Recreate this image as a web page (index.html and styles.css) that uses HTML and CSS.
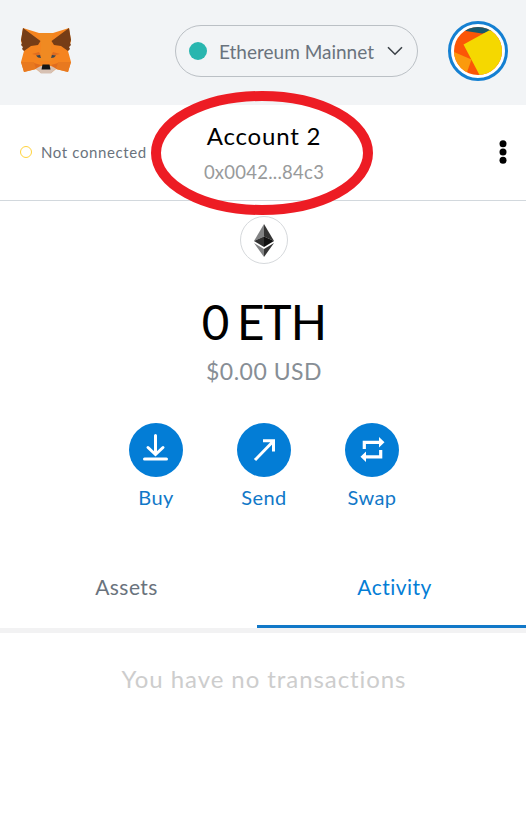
FILE: index.html
```html
<!DOCTYPE html>
<html lang="en">
<head>
<meta charset="utf-8">
<title>Wallet</title>
<link rel="stylesheet" href="styles.css">
</head>
<body>
<header class="topbar">
  <svg class="fox" viewBox="0 0 50 48" width="50" height="48">
    <path fill="#f5841f" d="M2 1 18 6H32L48 1 50 14 47 24 50 35 47 45 35 42 30 46H20L15 42 3 45 0 35 3 24 0 14Z"/>
    <path fill="#e8791f" d="M0 35H13L15 42 3 45ZM50 35H37L35 42 47 45Z"/>
    <path fill="#f08a22" d="M18 6H32L30 17 31 34H19L20 17Z"/>
    <path fill="#763d16" d="M2 1 19.500 14 17 18 10 19 3 24 1 22 2 20 0 18 1 16 0 13ZM48 1 30.500 14 33 18 40 19 47 24 49 22 48 20 50 18 49 16 50 13Z"/>
    <path fill="#df6c20" d="M11 27 18 25 20 29ZM39 27 32 25 30 29ZM13 36 20 38 15 42ZM37 36 30 38 35 42Z"/>
    <path fill="#3a4650" d="M15 28.500 19 28 20 31 17 30.500ZM35 28.500 31 28 30 31 33 30.500Z"/>
    <path fill="#d7c1b3" d="M15 41.500 20 39H30L35 41.500 30 46.500H20Z"/>
    <path fill="#161616" d="M21.500 37.500H28.500L29.500 42.500H20.500Z"/>
  </svg>
  <div class="network">
    <i class="network-dot"></i>
    <span class="network-name">Ethereum Mainnet</span>
    <svg class="chevron" viewBox="0 0 16 10" width="16" height="10"><path d="M1 1.200 8 8.200 15 1.200" fill="none" stroke="#3c4248" stroke-width="1.600"/></svg>
  </div>
  <div class="avatar">
    <svg viewBox="0 0 48 48" width="48" height="48">
      <defs><clipPath id="face"><circle cx="24" cy="24" r="24"/></clipPath></defs>
      <g clip-path="url(#face)">
        <path fill="#fb5607" d="M0 0H48V48H0Z"/>
        <path fill="#17596e" d="M8 0H44V3L28 6.500 12 4Z"/>
        <path fill="#fb9a0d" d="M0 25 17.500 32.500 12 48H0Z"/>
        <path fill="#f5d800" d="M9.500 17.500 35 3.500 56 0V48H25.500Z"/>
      </g>
    </svg>
  </div>
</header>
<section class="account">
  <div class="status"><i class="status-dot"></i><span class="status-text">Not connected</span></div>
  <div class="identity">
    <span class="account-name">Account 2</span>
    <span class="address">0x0042...84c3</span>
    <svg class="ring" viewBox="0 0 224 126" width="224" height="126"><ellipse cx="112" cy="63" rx="106" ry="57" fill="none" stroke="#ed1c24" stroke-width="10"/></svg>
  </div>
  <svg class="menu" viewBox="0 0 8 24" width="8" height="24"><circle cx="4" cy="3.700" r="3.500"/><circle cx="4" cy="12" r="3.500"/><circle cx="4" cy="20.300" r="3.500"/></svg>
</section>
<main class="overview">
  <div class="token">
    <svg viewBox="0 0 20 33" width="20" height="33">
      <path fill="#828384" d="M10 0V12.500L0 17Z"/><path fill="#343434" d="M10 0V12.500L20 17Z"/>
      <path fill="#303030" d="M0 17 10 12.500V23Z"/><path fill="#111" d="M20 17 10 12.500V23Z"/>
      <path fill="#828384" d="M0 19 10 25V33Z"/><path fill="#343434" d="M20 19 10 25V33Z"/>
    </svg>
  </div>
  <div class="balance">0 ETH</div>
  <div class="fiat">$0.00 USD</div>
  <nav class="actions">
    <div class="action">
      <svg viewBox="0 0 54 54" width="54" height="54"><circle cx="27" cy="27" r="27"/><path d="M26.500 12.500V30M19 24.500 26.500 31.500 34 24.500M15.500 36H37.500" stroke-width="3" stroke-linecap="round"/></svg>
      <span>Buy</span>
    </div>
    <div class="action">
      <svg viewBox="0 0 54 54" width="54" height="54"><circle cx="27" cy="27" r="27"/><path d="M18 37 36 18.500M26 17.800H36.500V28.500" stroke-width="3"/></svg>
      <span>Send</span>
    </div>
    <div class="action">
      <svg viewBox="0 0 54 54" width="54" height="54"><circle cx="27" cy="27" r="27"/><path d="M19.300 26V19.300H35M35.700 27V33.800H20" stroke-width="3.200"/><path class="tips" d="M34 14 39.500 19.300 34 24.500ZM21 28.500 15.500 33.800 21 39Z"/></svg>
      <span>Swap</span>
    </div>
  </nav>
</main>
<div class="tabs">
  <div class="tab">Assets</div>
  <div class="tab active">Activity</div>
</div>
<p class="empty">You have no transactions</p>
</body>
</html>
```
FILE: styles.css
```css
* { box-sizing: border-box; }
body { margin: 0; background: #fff; font-family: Lato, "Liberation Sans", sans-serif; width: 526px; height: 827px; overflow: hidden; white-space: nowrap; }
svg { display: block; flex: none; }
.topbar { height: 105px; background: #f2f4f6; display: flex; align-items: flex-start; padding: 21px 18px 0 21px; }
.fox { margin-top: 6px; }
.network { width: 243px; height: 52px; margin: 4px 30px 0 auto; border: 1px solid #bbc0c5; border-radius: 26px; display: flex; align-items: center; padding: 0 14px 0 13px; }
.network-dot { width: 18px; height: 18px; border-radius: 50%; background: #29b6af; margin-right: 12px; }
.network-name { font-size: 19px; color: #6a737d; }
.chevron { margin-left: auto; }
.avatar { width: 60px; height: 60px; border: 3px solid #1580d2; border-radius: 50%; background: #fff; padding: 3px; }
.account { height: 96px; border-bottom: 1px solid #d2d8dd; display: grid; grid-template-columns: 151px 226px 1fr; align-items: center; }
.status { display: flex; align-items: center; padding: 0 0 1px 20px; }
.status-dot { width: 12px; height: 12px; border: 1px solid #ffd33d; border-radius: 50%; margin-right: 9px; }
.status-text { font-size: 15px; letter-spacing: 0.62px; color: #6a737d; }
.identity { position: relative; height: 95px; display: flex; flex-direction: column; align-items: center; padding-top: 16px; }
.account-name { font-size: 24px; line-height: 30px; letter-spacing: 0.8px; color: #000; }
.address { font-size: 18.500px; line-height: 24px; margin-top: 9px; letter-spacing: 0.25px; color: #989a9b; }
.ring { position: absolute; left: -1px; top: -15px; }
.menu { justify-self: end; margin: 0 19px 2px 0; }
.overview { padding: 15px 0 0 2px; display: flex; flex-direction: column; align-items: center; }
.token { width: 48px; height: 48px; border: 1px solid #d6d9dc; border-radius: 50%; display: grid; place-items: center; }
.balance { margin-top: 28px; font-size: 47.500px; line-height: 60px; letter-spacing: -0.8px; word-spacing: -3px; color: #000; }
.fiat { margin-top: 4px; font-size: 23px; line-height: 30px; letter-spacing: 0.5px; color: #878e95; }
.actions { display: flex; gap: 54px; margin-top: 37px; }
.action { width: 54px; display: flex; flex-direction: column; align-items: center; color: #1178c8; font-size: 20px; line-height: 26px; letter-spacing: 0.4px; }
.action svg { margin-bottom: 7px; fill: none; stroke: #fff; }
.action circle { fill: #037dd6; stroke: none; }
.action .tips { fill: #fff; stroke: none; }
.tabs { height: 80px; margin-top: 38px; display: grid; grid-template-columns: 257px 1fr; box-shadow: 0 5px 0 #f2f2f3; font-size: 21px; letter-spacing: 0.45px; color: #6a737d; }
.tab { display: flex; justify-content: center; align-items: center; padding: 0 4px 3px 0; }
.active { color: #037dd6; border-bottom: 3px solid #1178c8; padding: 0 0 0 6px; }
.empty { margin: 36px 0 0 2px; text-align: center; font-size: 24px; line-height: 30px; letter-spacing: 0.93px; color: #cdcdcd; }
```
